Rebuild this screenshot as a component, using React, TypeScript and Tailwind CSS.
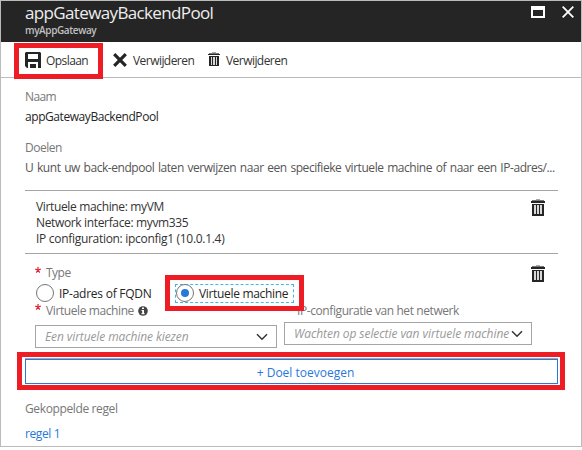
import type { ReactNode } from 'react';

function Trash({ className }: { className: string }) {
  return (
    <svg className={className} viewBox="0 0 14 18" shapeRendering="crispEdges">
      <path d="M5 0h4v1H5z" fill="#aaa" />
      <path d="M1 1h12v1H1z" fill="#777" />
      <path d="M0 2h14v2H0z" fill="#252525" />
      <path d="M1 5h12v12H1z" fill="#252525" />
      <path d="M3 6h2v9H3zM6 6h2v9H6zM9 6h2v9H9z" fill="#d8d8d8" />
    </svg>
  );
}

function Chevron() {
  return (
    <svg className="h-[8px] w-[12px] shrink-0" viewBox="0 0 12 8">
      <path d="M1 1.2l5 5 5-5" fill="none" stroke="#333" strokeWidth="1.5" />
    </svg>
  );
}

function Radio({ checked = false }: { checked?: boolean }) {
  return (
    <span className="flex size-[18px] shrink-0 items-center justify-center rounded-full border border-[#777] bg-white">
      {checked && <span className="size-[8px] rounded-full bg-[#2878dc]" />}
    </span>
  );
}

function Required() {
  return (
    <svg className="mt-px h-[6px] w-[6px] shrink-0" viewBox="0 0 6 6">
      <path d="M3 0v3M.2 2.2L3 3l2.8-.8M1.3 5.6L3 3l1.7 2.6" fill="none" stroke="#e02030" strokeWidth="1.2" />
    </svg>
  );
}

function Text({ className, children }: { className: string; children: ReactNode }) {
  return <span className={`block whitespace-nowrap ${className}`}>{children}</span>;
}

export default function App() {
  return (
    <div className="h-[450px] w-[582px] overflow-hidden bg-white font-['Open_Sans','Noto_Sans',sans-serif] text-[12px] leading-4 text-[#333]">
      <div className="relative h-[447px] w-[582px] border border-[#bbb]">
        <header className="flex h-[41px] justify-between bg-[#252525] pl-6 text-[#eee]">
          <div>
            <Text className="h-[22px] text-[17px] leading-[24px] tracking-[-0.64px]">appGatewayBackendPool</Text>
            <Text className="text-[10px] font-semibold leading-[15px] tracking-[-0.4px] text-[#c0c0c0]">myAppGateway</Text>
          </div>
          <div className="flex gap-[17px] pr-[7px] pt-[5px]">
            <span className="h-3 w-[14px] border-2 border-t-4 border-white" />
            <svg className="size-3" viewBox="0 0 12 12">
              <path d="M.7.7l10.6 10.6M11.3.7L.7 11.3" stroke="#fff" strokeWidth="1.8" />
            </svg>
          </div>
        </header>

        <nav className="flex h-[36px] border-b border-[#bbb] pl-6 pt-[10px]">
          <div className="flex w-[88px]">
            <svg className="h-4 w-4" viewBox="0 0 16 16">
              <path d="M1 0h14l1 1v15H2l-2-2V1zM3 1v6h10V1zM3 10v6h2v-4h6v4h2v-6z" fill="#252525" fillRule="evenodd" />
              <path d="M3 1h10v1H3zM6 13h2v3H6z" fill="#252525" />
            </svg>
            <Text className="ml-[5px] mt-px tracking-[-0.57px]">Opslaan</Text>
          </div>
          <div className="flex w-[95px]">
            <svg className="mt-px h-[14px] w-[14px]" viewBox="0 0 14 14">
              <path d="M1.2 1.2l11.6 11.6M12.8 1.2L1.2 12.8" stroke="#252525" strokeWidth="3.2" />
            </svg>
            <Text className="ml-[6px] mt-px tracking-[-0.55px]">Verwijderen</Text>
          </div>
          <div className="flex">
            <Trash className="h-[15px] w-[12px]" />
            <Text className="ml-[6px] mt-px tracking-[-0.55px]">Verwijderen</Text>
          </div>
        </nav>

        <main className="pl-6 pr-[23px] pt-[11px]">
          <Text className="h-5 tracking-[-0.6px] text-[#777]">Naam</Text>
          <Text className="h-[31px] tracking-[-0.43px] text-[#252525]">appGatewayBackendPool</Text>
          <Text className="h-5 tracking-[-0.5px] text-[#777]">Doelen</Text>
          <Text className="h-[30px] tracking-[-0.45px] text-[#555] [word-spacing:1px]">U kunt uw back-endpool laten verwijzen naar een specifieke virtuele machine of naar een IP-adres/...</Text>

          <section className="flex h-[64px] justify-between border-y border-[#a5a5a5] pl-[11px] pr-[13px] pt-[8px]">
            <div>
              <Text className="tracking-[-0.35px]">Virtuele machine: myVM</Text>
              <Text className="tracking-[-0.35px]">Network interface: myvm335</Text>
              <Text className="tracking-[-0.3px]">IP configuration: ipconfig1 (10.0.1.4)</Text>
            </div>
            <Trash className="h-[18px] w-[14px]" />
          </section>

          <section className="h-[104px] pt-[11px]">
            <div className="flex h-[19px] pl-[10px] pr-[13px]">
              <div className="pt-px"><Required /></div>
              <Text className="ml-[5px] tracking-[-0.5px] text-[#777]">Type</Text>
              <Trash className="ml-auto h-[18px] w-[14px]" />
            </div>
            <div className="flex h-[18px] items-center pl-[11px]">
              <Radio />
              <Text className="ml-[5px] mt-0.5 w-[116px] tracking-[-0.25px] text-[#252525]">IP-adres of FQDN</Text>
              <div className="flex h-[19px] w-[119px] items-center border border-dashed border-[#40b8e8]">
                <Radio checked />
                <Text className="ml-[5px] mt-0.5 tracking-[-0.33px] text-[#252525]">Virtuele machine</Text>
              </div>
            </div>
            <div className="flex h-[18px] pl-[10px] pt-px">
              <Required />
              <Text className="ml-[5px] tracking-[-0.4px] text-[#777]">Virtuele machine</Text>
              <svg className="ml-1 mt-[3px] size-[10px]" viewBox="0 0 10 10">
                <circle cx="5" cy="5" r="4.8" fill="#444" />
                <path d="M4 1.5h2v1.5H4zM3.5 4H6v3.3h.7v1H3.4v-1h.8V5h-.7z" fill="#fff" />
              </svg>
              <Text className="ml-auto mr-[99px] tracking-[-0.41px] text-[#777]">IP-configuratie van het netwerk</Text>
            </div>
            <div className="flex items-start gap-[7px] pl-[10px] pt-[2px] italic text-[#999]">
              <div className="mt-[3px] flex h-[23px] w-[242px] items-center justify-between border border-[#a5a5a5] pl-[9px] pr-2">
                <Text className="tracking-[-0.1px]">Een virtuele machine kiezen</Text>
                <Chevron />
              </div>
              <div className="flex h-[23px] w-[248px] items-center justify-between border border-[#a5a5a5] pl-[9px] pr-2">
                <Text className="tracking-[-0.07px]">Wachten op selectie van virtuele machine</Text>
                <Chevron />
              </div>
            </div>
          </section>

          <div className="h-[43px] border-t border-[#a5a5a5]">
            <button className="flex h-[25px] w-full items-center justify-center border border-[#2878dc] pl-7 pt-0.5 text-[#2878dc]">
              <Text className="">+ Doel toevoegen</Text>
            </button>
          </div>

          <Text className="h-[25px] tracking-[-0.37px] text-[#777]">Gekoppelde regel</Text>
          <Text className="tracking-[-0.4px] text-[#2878dc]">regel 1</Text>
        </main>

        <div className="absolute left-[13px] top-[42px] h-[36px] w-[89px] border-5 border-[#ee1c24]" />
        <div className="absolute left-[164px] top-[274px] h-[36px] w-[139px] border-5 border-[#ee1c24]" />
        <div className="absolute left-[16px] top-[351px] h-[38px] w-[548px] border-5 border-[#ee1c24]" />
      </div>
    </div>
  );
}
